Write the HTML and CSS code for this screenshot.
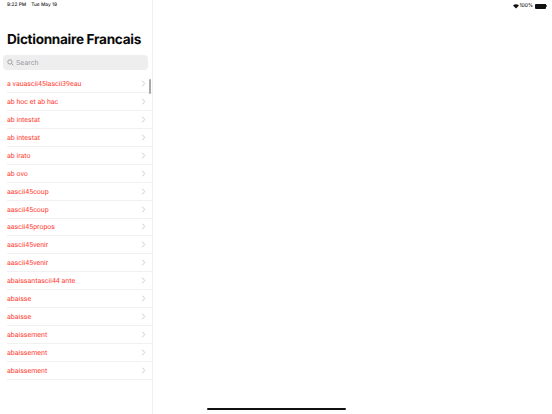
FILE: index.html
```html
<!DOCTYPE html>
<html lang="fr">
<head>
    <meta charset="UTF-8">
    <meta name="viewport" content="width=device-width, initial-scale=1.0">
    <title>Dictionnaire Francais</title>
    <link rel="stylesheet" href="styles.css">
</head>
<body>
    <div class="split">
        <aside class="sidebar">
            <div class="status-left">
                <span>9:22 PM</span>
                <span>Tue May 19</span>
            </div>
            <h1 class="title">Dictionnaire Francais</h1>
            <div class="search">
                <svg class="search-icon" viewBox="0 0 10 10"><circle cx="4.2" cy="4.2" r="3.1"/><path d="M6.5 6.5 9.2 9.2"/></svg>
                <span>Search</span>
            </div>
            <div class="list">
                <div class="scroll-thumb"></div>
                <div class="row"><span>a vauascii45lascii39eau</span><svg class="chevron" viewBox="0 0 5 8"><path d="M1 .8 4 4 1 7.2"/></svg></div>
                <div class="row"><span>ab hoc et ab hac</span><svg class="chevron" viewBox="0 0 5 8"><path d="M1 .8 4 4 1 7.2"/></svg></div>
                <div class="row"><span>ab intestat</span><svg class="chevron" viewBox="0 0 5 8"><path d="M1 .8 4 4 1 7.2"/></svg></div>
                <div class="row"><span>ab intestat</span><svg class="chevron" viewBox="0 0 5 8"><path d="M1 .8 4 4 1 7.2"/></svg></div>
                <div class="row"><span>ab irato</span><svg class="chevron" viewBox="0 0 5 8"><path d="M1 .8 4 4 1 7.2"/></svg></div>
                <div class="row"><span>ab ovo</span><svg class="chevron" viewBox="0 0 5 8"><path d="M1 .8 4 4 1 7.2"/></svg></div>
                <div class="row"><span>aascii45coup</span><svg class="chevron" viewBox="0 0 5 8"><path d="M1 .8 4 4 1 7.2"/></svg></div>
                <div class="row"><span>aascii45coup</span><svg class="chevron" viewBox="0 0 5 8"><path d="M1 .8 4 4 1 7.2"/></svg></div>
                <div class="row"><span>aascii45propos</span><svg class="chevron" viewBox="0 0 5 8"><path d="M1 .8 4 4 1 7.2"/></svg></div>
                <div class="row"><span>aascii45venir</span><svg class="chevron" viewBox="0 0 5 8"><path d="M1 .8 4 4 1 7.2"/></svg></div>
                <div class="row"><span>aascii45venir</span><svg class="chevron" viewBox="0 0 5 8"><path d="M1 .8 4 4 1 7.2"/></svg></div>
                <div class="row"><span>abaissantascii44 ante</span><svg class="chevron" viewBox="0 0 5 8"><path d="M1 .8 4 4 1 7.2"/></svg></div>
                <div class="row"><span>abaisse</span><svg class="chevron" viewBox="0 0 5 8"><path d="M1 .8 4 4 1 7.2"/></svg></div>
                <div class="row"><span>abaisse</span><svg class="chevron" viewBox="0 0 5 8"><path d="M1 .8 4 4 1 7.2"/></svg></div>
                <div class="row"><span>abaissement</span><svg class="chevron" viewBox="0 0 5 8"><path d="M1 .8 4 4 1 7.2"/></svg></div>
                <div class="row"><span>abaissement</span><svg class="chevron" viewBox="0 0 5 8"><path d="M1 .8 4 4 1 7.2"/></svg></div>
                <div class="row"><span>abaissement</span><svg class="chevron" viewBox="0 0 5 8"><path d="M1 .8 4 4 1 7.2"/></svg></div>
            </div>
        </aside>
        <main class="detail">
            <div class="status-right">
                <svg class="wifi" viewBox="0 0 12 9"><path d="M6 8.6 0 2.6C3.4-.6 8.6-.6 12 2.6Z"/></svg>
                <span>100%</span>
                <div class="battery"><div class="battery-fill"></div></div>
            </div>
        </main>
    </div>
    <div class="home-indicator"></div>
</body>
</html>
```
FILE: styles.css
```css
* {
    margin: 0;
    padding: 0;
    box-sizing: border-box;
    font-family: Inter, "Liberation Sans", sans-serif;
    text-rendering: geometricPrecision;
}

body {
    background-color: white;
    width: 552px;
    height: 414px;
    overflow: hidden;
    position: relative;
}

.split {
    display: flex;
    height: 414px;
}

.sidebar {
    width: 153px;
    flex-shrink: 0;
    border-right: 1px solid #f1f1f2;
}

.detail {
    flex: 1;
}

.status-left {
    display: flex;
    gap: 5px;
    padding: 2px 0 0 7px;
    height: 10px;
    font-size: 4.8px;
    line-height: 6px;
    font-weight: 500;
    color: #222;
}

.status-right {
    display: flex;
    justify-content: flex-end;
    align-items: center;
    gap: 1px;
    padding: 2px 6px 0 0;
    height: 10px;
    font-size: 5px;
    line-height: 6px;
    font-weight: 500;
    color: #222;
}

.wifi {
    width: 6px;
    height: 5px;
    fill: #111;
}

.battery {
    position: relative;
    width: 11px;
    height: 5px;
    margin-left: 1px;
    padding: 0.5px;
    border-radius: 1px;
    background-color: #111;
}

.battery::after {
    content: "";
    position: absolute;
    top: 1.5px;
    right: -1px;
    width: 1px;
    height: 2px;
    background-color: #666;
}

.battery-fill {
    height: 100%;
    background-color: #111;
}

.title {
    margin: 21px 0 0 7px;
    font-size: 13.6px;
    line-height: 18px;
    font-weight: 700;
    letter-spacing: -0.3px;
    color: #0a0a0a;
    white-space: nowrap;
}

.search {
    display: flex;
    align-items: center;
    gap: 2px;
    height: 14.5px;
    margin: 6px 4px 0 3px;
    padding-left: 4px;
    border-radius: 4px;
    background-color: #eeeeef;
    font-family: Roboto, sans-serif;
    font-size: 6.8px;
    color: #98989d;
}

.search-icon {
    width: 7px;
    height: 7px;
    fill: none;
    stroke: #85858a;
    stroke-width: 1;
}

.list {
    position: relative;
    margin-top: 5.5px;
}

.row {
    display: flex;
    justify-content: space-between;
    align-items: center;
    height: 17.95px;
    margin-left: 7px;
    padding-right: 6px;
    border-bottom: 1px solid #f1f1f2;
    font-size: 7px;
    color: #ff3b30;
}

.row span {
    padding-top: 1px;
    font-family: Roboto, sans-serif;
}

.chevron {
    width: 5px;
    height: 7px;
    fill: none;
    stroke: #c4c4c7;
    stroke-width: 1;
}

.scroll-thumb {
    position: absolute;
    top: 4px;
    right: 1px;
    width: 2px;
    height: 15px;
    border-radius: 1px;
    background-color: #a9a9ab;
}

.home-indicator {
    position: absolute;
    left: 207px;
    bottom: 4px;
    width: 139px;
    height: 2px;
    border-radius: 1px;
    background-color: #111;
}
```
